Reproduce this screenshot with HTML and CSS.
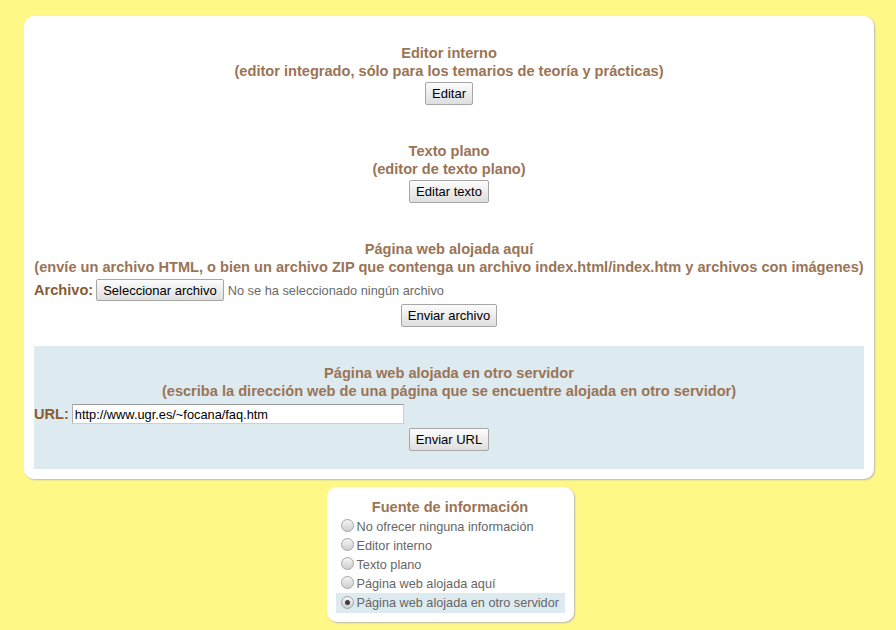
FILE: index.html
```html
<!DOCTYPE html>
<html lang="es">
<head>
<meta charset="utf-8">
<link rel="stylesheet" href="styles.css">
</head>
<body>
<div class="card">
  <div class="section">
    <div class="title">Editor interno</div>
    <div class="title">(editor integrado, sólo para los temarios de teoría y prácticas)</div>
    <div class="center"><button class="btn">Editar</button></div>
  </div>
  <div class="section">
    <div class="title">Texto plano</div>
    <div class="title">(editor de texto plano)</div>
    <div class="center"><button class="btn">Editar texto</button></div>
  </div>
  <div class="section">
    <div class="title">Página web alojada aquí</div>
    <div class="title">(envíe un archivo HTML, o bien un archivo ZIP que contenga un archivo index.html/index.htm y archivos con imágenes)</div>
    <div class="row"><span class="label">Archivo:</span><button class="btn">Seleccionar archivo</button><span class="nofile">No se ha seleccionado ningún archivo</span></div>
    <div class="center"><button class="btn">Enviar archivo</button></div>
  </div>
  <div class="section active">
    <div class="title">Página web alojada en otro servidor</div>
    <div class="title">(escriba la dirección web de una página que se encuentre alojada en otro servidor)</div>
    <div class="row"><span class="label">URL:</span><input class="url" type="text" value="http://www.ugr.es/~focana/faq.htm"></div>
    <div class="center"><button class="btn">Enviar URL</button></div>
  </div>
</div>
<div class="source">
  <div class="title">Fuente de información</div>
  <label class="opt"><span class="radio"></span>No ofrecer ninguna información</label>
  <label class="opt"><span class="radio"></span>Editor interno</label>
  <label class="opt"><span class="radio"></span>Texto plano</label>
  <label class="opt"><span class="radio"></span>Página web alojada aquí</label>
  <label class="opt selected"><span class="radio checked"></span>Página web alojada en otro servidor</label>
</div>
</body>
</html>
```
FILE: styles.css
```css
html, body {
  margin: 0;
  padding: 0;
}
body {
  background: #fff887;
  font-family: "Liberation Sans", Arial, sans-serif;
  padding: 16px 22px 9px 24px;
}
.card {
  background: #fff;
  border-radius: 10px;
  box-shadow: 1px 1px 2px #b8b8b8;
  padding: 10px;
}
.section {
  padding: 18px 0 19px;
}
.section.active {
  background: #ddeaf0;
  padding-bottom: 18px;
}
.title {
  text-align: center;
  color: #9a7455;
  font-weight: bold;
  font-size: 14.6px;
  line-height: 18px;
  white-space: nowrap;
}
.center {
  text-align: center;
  margin-top: 2px;
  line-height: 0;
}
.btn {
  font-family: "Liberation Sans", Arial, sans-serif;
  font-size: 13px;
  color: #000;
  height: 23px;
  padding: 0 6px;
  border: 1px solid #a6a6a6;
  border-radius: 2px;
  background: linear-gradient(#fcfcfc, #dedede);
  vertical-align: top;
}
.row {
  display: flex;
  align-items: center;
  margin-top: 3px;
  height: 22px;
}
.label {
  color: #8a5c34;
  font-weight: bold;
  font-size: 14.6px;
  margin-right: 3px;
}
.nofile {
  color: #6a6a6a;
  font-size: 12.8px;
  margin-left: 4px;
}
.row .btn {
  height: 22px;
}
.row + .center {
  margin-top: 3px;
}
.url {
  width: 326px;
  height: 18px;
  padding: 0 2px;
  border: 1px solid #cfcfcf;
  border-top-color: #9a9a9a;
  border-left-color: #b0b0b0;
  font-family: "Liberation Sans", Arial, sans-serif;
  font-size: 12.8px;
  color: #000;
  margin: 0;
}
.source {
  width: 229px;
  margin: 8px auto 0;
  position: relative;
  left: 1px;
  background: #fff;
  border-radius: 10px;
  box-shadow: 1px 1px 2px #b8b8b8;
  padding: 11px 9px 9px;
}
.source .title {
  margin-bottom: 1px;
}
.opt {
  display: flex;
  align-items: center;
  height: 19px;
  font-size: 12.7px;
  color: #666;
  white-space: nowrap;
}
.opt.selected {
  background: #ddeaf0;
  height: 20px;
}
.radio {
  width: 11px;
  height: 11px;
  border-radius: 50%;
  border: 1px solid #a4a4a4;
  background: linear-gradient(#f4f4f4, #cfcfcf);
  margin: 0 3px 2px 5px;
  position: relative;
  flex: none;
}
.radio.checked::after {
  content: "";
  position: absolute;
  left: 3px;
  top: 3px;
  width: 5px;
  height: 5px;
  border-radius: 50%;
  background: #3c3c3c;
}
```
